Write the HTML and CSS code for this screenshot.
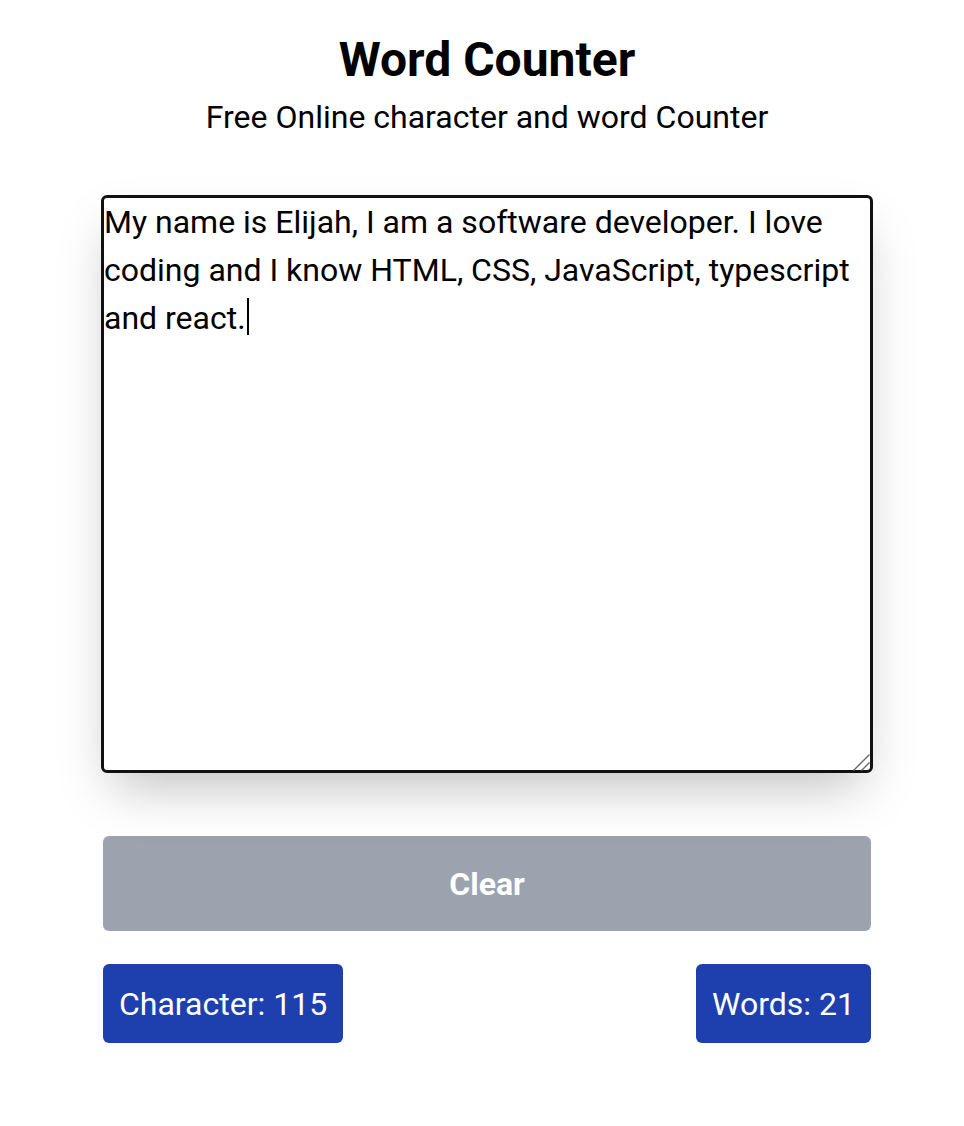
FILE: index.html
```html
<!DOCTYPE html>
<html lang="en">
<head>
<meta charset="utf-8">
<title>Word Counter</title>
<link rel="stylesheet" href="styles.css">
</head>
<body>
<main class="app">
  <header class="head">
    <h1 class="title">Word Counter</h1>
    <p class="subtitle">Free Online character and word Counter</p>
  </header>
  <div class="field">
    <div class="editor" contenteditable="true" role="textbox" aria-multiline="true">My name is Elijah, I am a software developer. I love coding and I know HTML, CSS, JavaScript, typescript and react.<span class="caret"></span></div>
    <svg class="grip" width="20" height="20" viewBox="0 0 20 20" aria-hidden="true">
      <line x1="0.5" y1="17.5" x2="16.5" y2="1.5" stroke="#6b6b6b" stroke-width="1.4"/>
      <line x1="8.5" y1="17.5" x2="16.5" y2="9.5" stroke="#6b6b6b" stroke-width="1.4"/>
    </svg>
  </div>
  <button class="clear" type="button">Clear</button>
  <div class="stats">
    <span class="badge">Character: 115</span>
    <span class="badge">Words: 21</span>
  </div>
</main>
</body>
</html>
```

FILE: styles.css
```css
html, body {
  margin: 0;
  background: #fff;
}
body {
  padding: 0 0 0 10px;
  font-family: Roboto, "Liberation Sans", sans-serif;
  color: #000;
}
.app {
  width: 768px;
  margin: 0 auto;
  display: flex;
  flex-direction: column;
}
.head {
  text-align: center;
  padding-top: 30px;
}
.title {
  margin: 0;
  font-size: 48px;
  line-height: 60px;
  font-weight: 700;
}
.subtitle {
  margin: 3px 0 0;
  font-size: 32px;
  line-height: 48px;
  font-weight: 400;
}
.field {
  position: relative;
  margin: 54px -2px 0;
  border-radius: 6px;
  box-shadow: 0 25px 50px -12px rgba(0,0,0,0.25);
}
.editor {
  height: 578px;
  box-sizing: border-box;
  border: 3px solid #111;
  border-radius: 6px;
  padding: 0;
  font-family: Roboto, "Liberation Sans", sans-serif;
  font-size: 32px;
  line-height: 48px;
  color: #000;
  outline: none;
  caret-color: transparent;
  background: #fff;
  overflow: auto;
  white-space: pre-wrap;
}
.grip {
  position: absolute;
  right: 0;
  bottom: 0;
  display: block;
  pointer-events: none;
}
.caret {
  display: inline-block;
  width: 2px;
  height: 37px;
  background: #000;
  vertical-align: -6px;
  margin-left: 1px;
}
.clear {
  margin-top: 63px;
  height: 95px;
  border: none;
  border-radius: 6px;
  background: #9ca3af;
  color: #fff;
  font-family: Roboto, "Liberation Sans", sans-serif;
  font-size: 32px;
  font-weight: 700;
}
.stats {
  margin-top: 33px;
  display: flex;
  justify-content: space-between;
}
.badge {
  height: 79px;
  display: flex;
  align-items: center;
  padding: 0 16px;
  border-radius: 6px;
  background: #1e40af;
  color: #fff;
  font-size: 32px;
}
```
